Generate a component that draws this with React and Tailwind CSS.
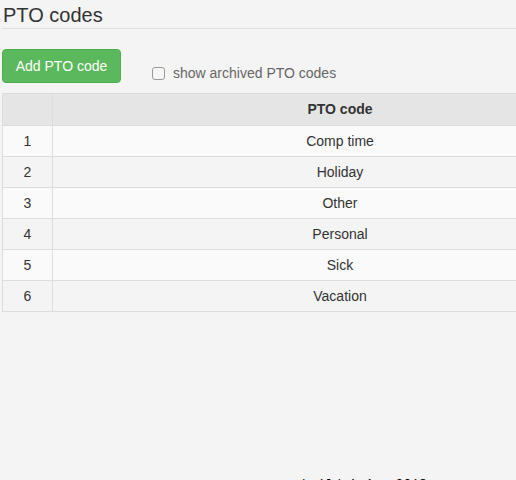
import React from "react";

const codes = ["Comp time", "Holiday", "Other", "Personal", "Sick", "Vacation"];

export default function App() {
    return (
        <div className="w-[516px] h-[480px] overflow-hidden bg-[#f4f4f4] text-[#333] font-['Liberation_Sans',Arial,sans-serif] text-[14px]">
            <div className="w-[640px] px-[2px]">
                <h1 className="text-[20px] leading-[22px] pt-[4px] pb-[2px] pl-[1px] font-normal">PTO codes</h1>
                <div className="border-b border-[#e0e0e0] w-[514px]" />
                <div className="flex items-end mt-[20px]">
                    <button className="bg-[#5cb85c] border border-[#4cae4c] text-white rounded-[4px] h-[34px] w-[119px] text-[14px]">
                        Add PTO code
                    </button>
                    <label className="flex items-center ml-[31px] mb-[1px] text-[#666] h-[18px]">
                        <span className="w-[13px] h-[13px] border border-[#999] rounded-[3px] bg-[#f6f6f6] mr-[8px]" />
                        show archived PTO codes
                    </label>
                </div>
                <table className="mt-[10px] w-[626px] border-collapse border border-[#ddd]">
                    <thead>
                        <tr className="bg-[#e5e5e5] h-[32px]">
                            <th className="w-[50px] border border-[#ddd]" />
                            <th className="border border-[#ddd] font-bold">PTO code</th>
                        </tr>
                    </thead>
                    <tbody>
                        {codes.map((c, i) => (
                            <tr key={c} className={`h-[31px] ${i % 2 ? "bg-[#f4f4f4]" : "bg-[#fafafa]"}`}>
                                <td className="border border-[#ddd] text-center">{i + 1}</td>
                                <td className="border border-[#ddd] text-center">{c}</td>
                            </tr>
                        ))}
                    </tbody>
                </table>
                <div className="mt-[163px] text-black text-[13px] font-['Liberation_Mono',monospace] pl-[300px]">
                    build 1.4 &nbsp; 2018
                </div>
            </div>
        </div>
    );
}
